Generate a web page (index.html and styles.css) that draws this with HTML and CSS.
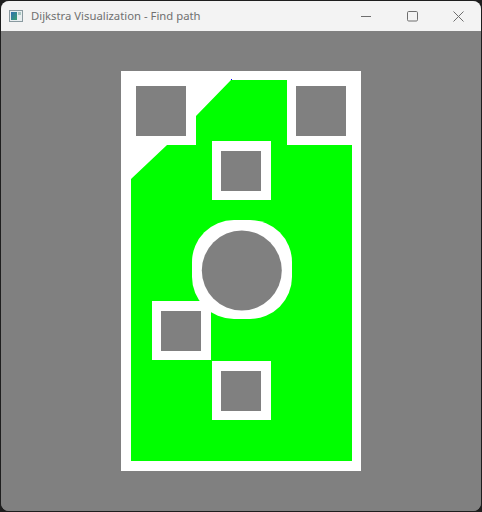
FILE: index.html
```html
<!DOCTYPE html>
<html>
<head>
<meta charset="utf-8">
<title>Dijkstra Visualization - Find path</title>
<link rel="stylesheet" href="styles.css">
</head>
<body>
<div class="window">
  <div class="titlebar">
    <div class="app">
      <svg class="app-icon" width="14" height="12" viewBox="0 0 14 12">
        <defs>
          <linearGradient id="g" x1="0" y1="0" x2="1" y2="1">
            <stop offset="0" stop-color="#2e6fb0"/>
            <stop offset="1" stop-color="#3aa070"/>
          </linearGradient>
        </defs>
        <rect x="0.5" y="0.5" width="13" height="11" fill="#e8eef0" stroke="#8a9aa0"/>
        <rect x="2" y="2" width="6" height="8" fill="url(#g)"/>
        <rect x="9" y="2" width="3" height="3" fill="#a9c6c0"/>
      </svg>
      <span class="title">Dijkstra Visualization - Find path</span>
    </div>
    <div class="controls">
      <div class="ctl">
        <svg width="10" height="10" viewBox="0 0 10 10"><line x1="0" y1="5.5" x2="10" y2="5.5" stroke="#6e6e6e" stroke-width="1"/></svg>
      </div>
      <div class="ctl">
        <svg width="11" height="11" viewBox="0 0 11 11"><rect x="0.5" y="0.5" width="10" height="9.5" rx="1.2" fill="none" stroke="#6e6e6e" stroke-width="1"/></svg>
      </div>
      <div class="ctl">
        <svg width="11" height="11" viewBox="0 0 11 11"><path d="M0.5 0.5 L10.5 10.5 M10.5 0.5 L0.5 10.5" stroke="#6e6e6e" stroke-width="1"/></svg>
      </div>
    </div>
  </div>
  <div class="content">
    <svg class="scene" width="480" height="480" viewBox="1 31 480 480">
      <rect x="121" y="71" width="240" height="400" fill="#ffffff"/>
      <polygon points="231,80 287,80 287,145 352,145 352,461 131,461 131,179 167,145 196,145 196,116" fill="#00ff00"/>
      <rect x="231" y="79" width="1" height="1" fill="#0000ff"/>
      <rect x="136" y="86" width="50" height="50" fill="#808080"/>
      <rect x="296" y="86" width="50" height="50" fill="#808080"/>
      <rect x="212" y="141" width="59" height="59" fill="#ffffff"/>
      <rect x="221" y="151" width="40" height="40" fill="#808080"/>
      <rect x="192" y="220" width="100" height="99" rx="42" ry="42" fill="#ffffff"/>
      <circle cx="241.8" cy="270.5" r="40" fill="#808080"/>
      <rect x="152" y="301" width="59" height="59" fill="#ffffff"/>
      <rect x="161" y="311" width="40" height="40" fill="#808080"/>
      <rect x="212" y="361" width="59" height="59" fill="#ffffff"/>
      <rect x="221" y="371" width="40" height="40" fill="#808080"/>
    </svg>
  </div>
</div>
</body>
</html>
```
FILE: styles.css
```css
html, body {
  margin: 0;
  padding: 0;
}
body {
  background: #1e1e1e;
  width: 482px;
  height: 512px;
  overflow: hidden;
}
.window {
  margin: 1px 1px 0 1px;
  width: 480px;
  height: 510px;
  border-radius: 8px;
  overflow: hidden;
  display: flex;
  flex-direction: column;
  background: #808080;
}
.titlebar {
  height: 30px;
  flex: none;
  background: #f3f3f3;
  display: flex;
  align-items: center;
  justify-content: space-between;
}
.app {
  display: flex;
  align-items: center;
  padding-left: 8px;
  gap: 8px;
}
.app-icon {
  display: block;
}
.title {
  font-family: "Noto Sans", "Open Sans", sans-serif;
  font-size: 11.3px;
  color: #707070;
  line-height: 16px;
}
.controls {
  display: flex;
  height: 30px;
}
.ctl {
  width: 46px;
  height: 30px;
  display: flex;
  align-items: center;
  justify-content: center;
}
.ctl svg {
  display: block;
}
.content {
  flex: 1;
  background: #808080;
}
.scene {
  display: block;
}
```
